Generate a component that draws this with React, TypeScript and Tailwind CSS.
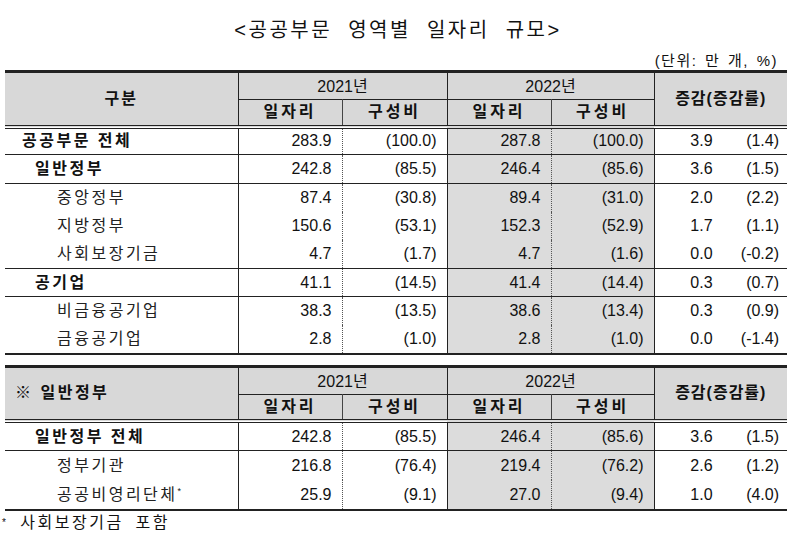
import React from "react";

type Row = {
  label: React.ReactNode;
  indent: number;
  bold?: boolean;
  v: [string, string, string, string, string, string];
  line?: "thin" | "thick" | "none";
};

const rows1: Row[] = [
  { label: "공공부문 전체", indent: 0, bold: true, v: ["283.9", "(100.0)", "287.8", "(100.0)", "3.9", "(1.4)"], line: "thin" },
  { label: "일반정부", indent: 1, bold: true, v: ["242.8", "(85.5)", "246.4", "(85.6)", "3.6", "(1.5)"], line: "thin" },
  { label: "중앙정부", indent: 2, v: ["87.4", "(30.8)", "89.4", "(31.0)", "2.0", "(2.2)"] },
  { label: "지방정부", indent: 2, v: ["150.6", "(53.1)", "152.3", "(52.9)", "1.7", "(1.1)"] },
  { label: "사회보장기금", indent: 2, v: ["4.7", "(1.7)", "4.7", "(1.6)", "0.0", "(-0.2)"], line: "thin" },
  { label: "공기업", indent: 1, bold: true, v: ["41.1", "(14.5)", "41.4", "(14.4)", "0.3", "(0.7)"], line: "thin" },
  { label: "비금융공기업", indent: 2, v: ["38.3", "(13.5)", "38.6", "(13.4)", "0.3", "(0.9)"] },
  { label: "금융공기업", indent: 2, v: ["2.8", "(1.0)", "2.8", "(1.0)", "0.0", "(-1.4)"], line: "thick" },
];

const rows2: Row[] = [
  { label: "일반정부 전체", indent: 1, bold: true, v: ["242.8", "(85.5)", "246.4", "(85.6)", "3.6", "(1.5)"], line: "thin" },
  { label: "정부기관", indent: 2, v: ["216.8", "(76.4)", "219.4", "(76.2)", "2.6", "(1.2)"] },
  {
    label: (
      <>
        공공비영리단체<sup className="text-[9px] -top-[6px]">*</sup>
      </>
    ),
    indent: 2,
    v: ["25.9", "(9.1)", "27.0", "(9.4)", "1.0", "(4.0)"],
    line: "thick",
  },
];

const indentCls = ["pl-[17px]", "pl-[30px]", "pl-[52px]"];

function Header({ label }: { label: React.ReactNode }) {
  return (
    <thead>
      <tr className="h-[28px] bg-[#d8d8d8] border-t-[3px] border-[#222]">
        <th rowSpan={2} className="border-r border-b-[4px] border-b-[#222] border-double border-r-[#222] font-bold text-[16px] align-middle tracking-[2px]">
          {label}
        </th>
        <th colSpan={2} className="border-r border-r-[#222] border-b border-b-[#222] font-normal text-[16px] pt-[2px]">
          2021년
        </th>
        <th colSpan={2} className="border-r border-r-[#222] border-b border-b-[#222] font-normal text-[16px] pt-[2px]">
          2022년
        </th>
        <th rowSpan={2} className="border-b-[4px] border-b-[#222] border-double font-bold text-[16px] tracking-[1px]">
          증감(증감률)
        </th>
      </tr>
      <tr className="h-[27px] bg-[#d8d8d8]">
        <th className="border-r border-dotted border-r-[#444] border-b-[4px] border-b-[#222] border-double font-bold text-[16px] tracking-[3px]">
          일자리
        </th>
        <th className="border-r border-r-[#222] border-b-[4px] border-b-[#222] border-double font-bold text-[16px] tracking-[3px]">
          구성비
        </th>
        <th className="border-r border-dotted border-r-[#444] border-b-[4px] border-b-[#222] border-double font-bold text-[16px] tracking-[3px]">
          일자리
        </th>
        <th className="border-r border-r-[#222] border-b-[4px] border-b-[#222] border-double font-bold text-[16px] tracking-[3px]">
          구성비
        </th>
      </tr>
    </thead>
  );
}

function Body({ rows, h }: { rows: Row[]; h: string }) {
  return (
    <tbody>
      {rows.map((r, i) => {
        const line =
          r.line === "thick"
            ? "border-b-[2px] border-b-[#222]"
            : r.line === "thin"
            ? "border-b border-b-[#222]"
            : "";
        return (
          <tr key={i} className={`${h} ${line}`}>
            <td className={`${indentCls[r.indent]} border-r border-r-[#222] text-[16px] tracking-[2.5px] ${r.bold ? "font-bold" : "text-[#222]"}`}>
              {r.label}
            </td>
            <td className="text-right pr-[10px] border-r border-dotted border-r-[#555]">{r.v[0]}</td>
            <td className="text-right pr-[10px] border-r border-r-[#222]">{r.v[1]}</td>
            <td className="text-right pr-[10px] border-r border-dotted border-r-[#555] bg-[#dcdcdc]">{r.v[2]}</td>
            <td className="text-right pr-[10px] border-r border-r-[#222] bg-[#dcdcdc]">{r.v[3]}</td>
            <td>
              <div className="flex">
                <span className="w-[58px] text-right">{r.v[4]}</span>
                <span className="flex-1 text-right pr-[8px]">{r.v[5]}</span>
              </div>
            </td>
          </tr>
        );
      })}
    </tbody>
  );
}

function Table({ label, rows, h }: { label: React.ReactNode; rows: Row[]; h: string }) {
  return (
    <table className="table-fixed border-collapse w-[782px] ml-[5px] text-[16px] text-[#111]">
      <colgroup>
        <col className="w-[233px]" />
        <col className="w-[104px]" />
        <col className="w-[105px]" />
        <col className="w-[104px]" />
        <col className="w-[103px]" />
        <col className="w-[133px]" />
      </colgroup>
      <Header label={label} />
      <Body rows={rows} h={h} />
    </table>
  );
}

export default function App() {
  return (
    <div className="w-[800px] h-[535px] bg-white overflow-hidden font-['Liberation_Sans','Noto_Sans_CJK_KR',sans-serif] text-[#111]">
      <h1 className="pt-[17px] text-center text-[20px] leading-[26px] tracking-[2.5px] pr-[4px] [word-spacing:8px]">
        &lt;공공부문 영역별 일자리 규모&gt;
      </h1>
      <div className="mt-[9px] text-right pr-[22px] text-[15px] leading-[18px] tracking-[1.5px] [word-spacing:2px]">
        (단위: 만 개, %)
      </div>
      <div className="mt-0">
        <Table label="구분" rows={rows1} h="h-[28.4px]" />
      </div>
      <div className="mt-[10px]">
        <Table
          label={<div className="text-left pl-[10px] tracking-[2.5px]">※ 일반정부</div>}
          rows={rows2}
          h="h-[29.6px]"
        />
      </div>
      <div className="pl-[2px] pt-[3px] text-[16px] leading-[18px] tracking-[2.5px] [word-spacing:5px]">
        <span className="text-[10px] align-top">*</span> 사회보장기금 포함
      </div>
    </div>
  );
}
